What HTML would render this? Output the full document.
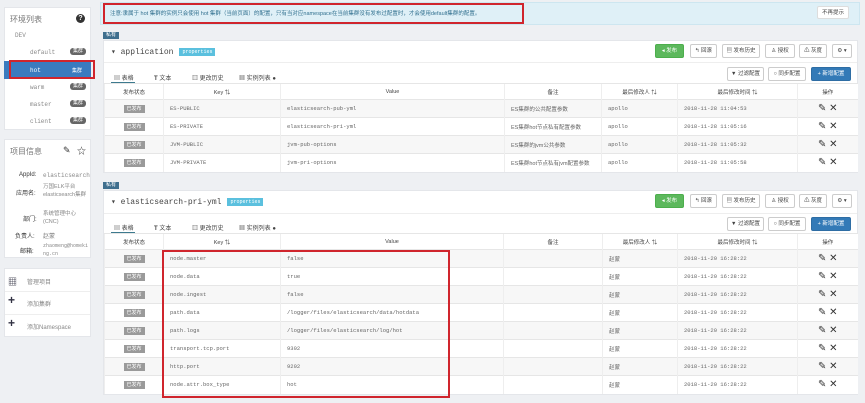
<!DOCTYPE html>
<html><head><meta charset="utf-8"><style>
*{box-sizing:border-box;margin:0;padding:0}
body{width:865px;height:403px;background:#eef0f3;font-family:"Liberation Sans","Noto Sans CJK SC",sans-serif;font-size:6px;color:#555;position:relative;overflow:hidden}
.a{position:absolute}
.pan{position:absolute;background:#fff;border:1px solid #e4e6ea}
.mono{font-family:"Liberation Mono","Noto Sans CJK SC",monospace}
.badge{display:inline-block;background:#777;color:#fff;font-size:5px;border-radius:3px;padding:0 3px;line-height:7px}
.btn{position:absolute;height:14px;border:1px solid #ccc;background:#fff;border-radius:2px;font-size:5.5px;line-height:12px;text-align:center;color:#444}
table{border-collapse:collapse;position:absolute;table-layout:fixed;background:#fff}
td{border-top:1px solid #e6e6e6;border-left:1px solid #eee;height:18px;font-size:5.5px;color:#666;padding-left:6px;white-space:nowrap;overflow:hidden}
tr.h td{height:16px;text-align:center;color:#444;padding:0}
tr:nth-child(even):not(.h) td{background:#f7f7f7}
td.s{text-align:center;padding:0}
.st{display:inline-block;background:#9a9a9a;color:#fff;font-size:5px;width:21px;line-height:8px}
td.op{text-align:center;padding:0;font-size:10px;color:#333}
.lbl{position:absolute;background:#3f6f8e;color:#fff;font-size:5px;line-height:7px;padding:0 3px}
.prop{display:inline-block;background:#5bc0de;color:#fff;font-size:5px;line-height:8px;padding:0 3px;margin-left:6px;vertical-align:middle}
.red{position:absolute;border:2px solid #d0252d}
</style></head><body>

<!-- sidebar env -->
<div class="pan" style="left:4px;top:7px;width:87px;height:123px">
 <div class="a" style="left:5px;top:6px;font-size:8px;color:#777">环境列表</div>
 <div class="a" style="left:71px;top:6px;width:9px;height:9px;border-radius:50%;background:#333;color:#fff;font-size:7px;text-align:center;line-height:9px;font-weight:bold">?</div>
 <div class="a mono" style="left:10px;top:24px;color:#888">DEV</div>
 <div class="a mono" style="left:25px;top:41px;color:#888">default</div><div class="a badge" style="left:65px;top:40px;background:#666">集群</div>
 <div class="a" style="left:-1px;top:53px;width:87px;height:18px;background:#3a7bbf"></div>
 <div class="a mono" style="left:25px;top:59px;color:#fff">hot</div><div class="a" style="left:67px;top:59px;color:#fff;font-size:5px">集群</div>
 <div class="a mono" style="left:25px;top:76px;color:#888">warm</div><div class="a badge" style="left:65px;top:75px;background:#666">集群</div>
 <div class="a mono" style="left:25px;top:93px;color:#888">master</div><div class="a badge" style="left:65px;top:92px;background:#666">集群</div>
 <div class="a mono" style="left:25px;top:110px;color:#888">client</div><div class="a badge" style="left:65px;top:109px;background:#666">集群</div>
</div>
<div class="red" style="left:9px;top:60px;width:86px;height:19px"></div>

<!-- project info -->
<div class="pan" style="left:4px;top:139px;width:87px;height:119px">
 <div class="a" style="left:5px;top:6px;font-size:8px;color:#777">项目信息</div>
 <div class="a" style="left:58px;top:5px;font-size:9px;color:#333">&#9998;</div>
 <div class="a" style="left:72px;top:4px;font-size:9px;color:#333">☆</div>
 <div class="a" style="left:14px;top:32px;color:#333">AppId:</div><div class="a mono" style="left:38px;top:32px;color:#888">elasticsearch</div>
 <div class="a" style="left:11px;top:48px;color:#333">应用名:</div><div class="a" style="left:38px;top:43px;color:#888;width:46px;line-height:8px;font-size:5.5px">万国ELK平台elasticsearch集群</div>
 <div class="a" style="left:18px;top:74px;color:#333">部门:</div><div class="a" style="left:38px;top:70px;color:#888;width:46px;line-height:8px;font-size:5.5px">系统管理中心(CNC)</div>
 <div class="a" style="left:10px;top:91px;color:#333">负责人:</div><div class="a" style="left:38px;top:91px;color:#888">赵蒙</div>
 <div class="a" style="left:15px;top:106px;color:#333">邮箱:</div><div class="a mono" style="left:38px;top:102px;color:#888;width:46px;line-height:8px;font-size:5px;word-break:break-all">zhaomeng@homeking.cn</div>
</div>

<!-- menu -->
<div class="pan" style="left:4px;top:268px;width:87px;height:69px">
 <div class="a" style="left:3px;top:6px;font-size:9px;color:#334">▦</div><div class="a" style="left:22px;top:8px;color:#888">管理项目</div>
 <div class="a" style="left:0;top:22px;width:85px;border-top:1px solid #eee"></div>
 <div class="a" style="left:3px;top:24px;font-size:12px;color:#334;font-weight:bold">+</div><div class="a" style="left:22px;top:30px;color:#888">添加集群</div>
 <div class="a" style="left:0;top:45px;width:85px;border-top:1px solid #eee"></div>
 <div class="a" style="left:3px;top:47px;font-size:12px;color:#334;font-weight:bold">+</div><div class="a" style="left:22px;top:53px;color:#888">添加Namespace</div>
</div>

<!-- notice -->
<div class="a" style="left:100px;top:2px;width:760px;height:23px;background:#dff0f7;border:1px solid #cde6f0"></div>
<div class="a" style="left:110px;top:9px;color:#31708f;font-size:5.5px">注意:隶属于 hot 集群的实例只会使用 hot 集群（当前页面）的配置，只有当对应namespace在当前集群没有发布过配置时，才会使用default集群的配置。</div>
<div class="btn" style="left:817px;top:6px;width:32px;height:13px;border-color:#ddd">不再提示</div>
<div class="red" style="left:103px;top:3px;width:421px;height:21px"></div>

<!-- panel 1 -->
<div class="lbl" style="left:103px;top:32px">私有</div>
<div class="pan" style="left:103px;top:40px;width:755px;height:133px">
 <div class="a" style="left:0;top:21px;width:753px;border-top:1px solid #eee"></div>
 <div class="a mono" style="left:7px;top:6px;font-size:8px;color:#444">▾ application<span class="prop">properties</span></div>
 <div class="a" style="left:10px;top:32px;color:#444">▤ 表格</div><div class="a" style="left:7px;top:41px;width:24px;border-top:1.5px solid #3d7a8e"></div>
 <div class="a" style="left:50px;top:32px;color:#444"><b>T</b> 文本</div>
 <div class="a" style="left:88px;top:32px;color:#444">▥ 更改历史</div>
 <div class="a" style="left:135px;top:32px;color:#444">▦ 实例列表 <b>●</b></div>
</div>
<div class="btn" style="left:655px;top:44px;width:29px;background:#5cb85c;border-color:#4cae4c;color:#fff">◂ 发布</div>
<div class="btn" style="left:690px;top:44px;width:27px">↰ 回滚</div>
<div class="btn" style="left:722px;top:44px;width:38px">▤ 发布历史</div>
<div class="btn" style="left:765px;top:44px;width:30px">♙ 授权</div>
<div class="btn" style="left:799px;top:44px;width:28px">⚠ 灰度</div>
<div class="btn" style="left:832px;top:44px;width:20px">⚙ ▾</div>
<div class="btn" style="left:727px;top:67px;width:37px">▼ 过滤配置</div>
<div class="btn" style="left:768px;top:67px;width:38px">○ 同步配置</div>
<div class="btn" style="left:811px;top:67px;width:40px;background:#337ab7;border-color:#2e6da4;color:#fff">+ 新增配置</div>

<table style="left:104px;top:83px;width:753px">
<colgroup><col style="width:59px"><col style="width:117px"><col style="width:224px"><col style="width:97px"><col style="width:76px"><col style="width:120px"><col style="width:60px"></colgroup>
<tr class="h"><td>发布状态</td><td>Key ⇅</td><td>Value</td><td>备注</td><td>最后修改人 ⇅</td><td>最后修改时间 ⇅</td><td>操作</td></tr>
<tr><td class="s"><span class="st">已发布</span></td><td class="mono">ES-PUBLIC</td><td class="mono">elasticsearch-pub-yml</td><td>ES集群的公共配置参数</td><td class="mono">apollo</td><td class="mono">2018-11-28 11:04:53</td><td class="op">✎ ✕</td></tr>
<tr><td class="s"><span class="st">已发布</span></td><td class="mono">ES-PRIVATE</td><td class="mono">elasticsearch-pri-yml</td><td>ES集群hot节点私有配置参数</td><td class="mono">apollo</td><td class="mono">2018-11-28 11:05:16</td><td class="op">✎ ✕</td></tr>
<tr><td class="s"><span class="st">已发布</span></td><td class="mono">JVM-PUBLIC</td><td class="mono">jvm-pub-options</td><td>ES集群的jvm公共参数</td><td class="mono">apollo</td><td class="mono">2018-11-28 11:05:32</td><td class="op">✎ ✕</td></tr>
<tr><td class="s"><span class="st">已发布</span></td><td class="mono">JVM-PRIVATE</td><td class="mono">jvm-pri-options</td><td>ES集群hot节点私有jvm配置参数</td><td class="mono">apollo</td><td class="mono">2018-11-28 11:05:58</td><td class="op">✎ ✕</td></tr>
</table>

<!-- panel 2 -->
<div class="lbl" style="left:103px;top:182px">私有</div>
<div class="pan" style="left:103px;top:190px;width:755px;height:205px">
 <div class="a" style="left:0;top:22px;width:753px;border-top:1px solid #eee"></div>
 <div class="a mono" style="left:7px;top:6px;font-size:8px;color:#444">▾ elasticsearch-pri-yml<span class="prop">properties</span></div>
 <div class="a" style="left:10px;top:32px;color:#444">▤ 表格</div><div class="a" style="left:7px;top:41px;width:24px;border-top:1.5px solid #3d7a8e"></div>
 <div class="a" style="left:50px;top:32px;color:#444"><b>T</b> 文本</div>
 <div class="a" style="left:88px;top:32px;color:#444">▥ 更改历史</div>
 <div class="a" style="left:135px;top:32px;color:#444">▦ 实例列表 <b>●</b></div>
</div>
<div class="btn" style="left:655px;top:194px;width:29px;background:#5cb85c;border-color:#4cae4c;color:#fff">◂ 发布</div>
<div class="btn" style="left:690px;top:194px;width:27px">↰ 回滚</div>
<div class="btn" style="left:722px;top:194px;width:38px">▤ 发布历史</div>
<div class="btn" style="left:765px;top:194px;width:30px">♙ 授权</div>
<div class="btn" style="left:799px;top:194px;width:28px">⚠ 灰度</div>
<div class="btn" style="left:832px;top:194px;width:20px">⚙ ▾</div>
<div class="btn" style="left:727px;top:217px;width:37px">▼ 过滤配置</div>
<div class="btn" style="left:768px;top:217px;width:38px">○ 同步配置</div>
<div class="btn" style="left:811px;top:217px;width:40px;background:#337ab7;border-color:#2e6da4;color:#fff">+ 新增配置</div>

<table style="left:104px;top:233px;width:753px">
<colgroup><col style="width:59px"><col style="width:117px"><col style="width:223px"><col style="width:99px"><col style="width:75px"><col style="width:120px"><col style="width:60px"></colgroup>
<tr class="h"><td>发布状态</td><td>Key ⇅</td><td>Value</td><td>备注</td><td>最后修改人 ⇅</td><td>最后修改时间 ⇅</td><td>操作</td></tr>
<tr><td class="s"><span class="st">已发布</span></td><td class="mono">node.master</td><td class="mono">false</td><td></td><td>赵蒙</td><td class="mono">2018-11-20 16:28:22</td><td class="op">✎ ✕</td></tr>
<tr><td class="s"><span class="st">已发布</span></td><td class="mono">node.data</td><td class="mono">true</td><td></td><td>赵蒙</td><td class="mono">2018-11-20 16:28:22</td><td class="op">✎ ✕</td></tr>
<tr><td class="s"><span class="st">已发布</span></td><td class="mono">node.ingest</td><td class="mono">false</td><td></td><td>赵蒙</td><td class="mono">2018-11-20 16:28:22</td><td class="op">✎ ✕</td></tr>
<tr><td class="s"><span class="st">已发布</span></td><td class="mono">path.data</td><td class="mono">/logger/files/elasticsearch/data/hotdata</td><td></td><td>赵蒙</td><td class="mono">2018-11-20 16:28:22</td><td class="op">✎ ✕</td></tr>
<tr><td class="s"><span class="st">已发布</span></td><td class="mono">path.logs</td><td class="mono">/logger/files/elasticsearch/log/hot</td><td></td><td>赵蒙</td><td class="mono">2018-11-20 16:28:22</td><td class="op">✎ ✕</td></tr>
<tr><td class="s"><span class="st">已发布</span></td><td class="mono">transport.tcp.port</td><td class="mono">9302</td><td></td><td>赵蒙</td><td class="mono">2018-11-20 16:28:22</td><td class="op">✎ ✕</td></tr>
<tr><td class="s"><span class="st">已发布</span></td><td class="mono">http.port</td><td class="mono">9202</td><td></td><td>赵蒙</td><td class="mono">2018-11-20 16:28:22</td><td class="op">✎ ✕</td></tr>
<tr><td class="s"><span class="st">已发布</span></td><td class="mono">node.attr.box_type</td><td class="mono">hot</td><td></td><td>赵蒙</td><td class="mono">2018-11-20 16:28:22</td><td class="op">✎ ✕</td></tr>
</table>
<div class="red" style="left:162px;top:250px;width:288px;height:148px"></div>
</body></html>
